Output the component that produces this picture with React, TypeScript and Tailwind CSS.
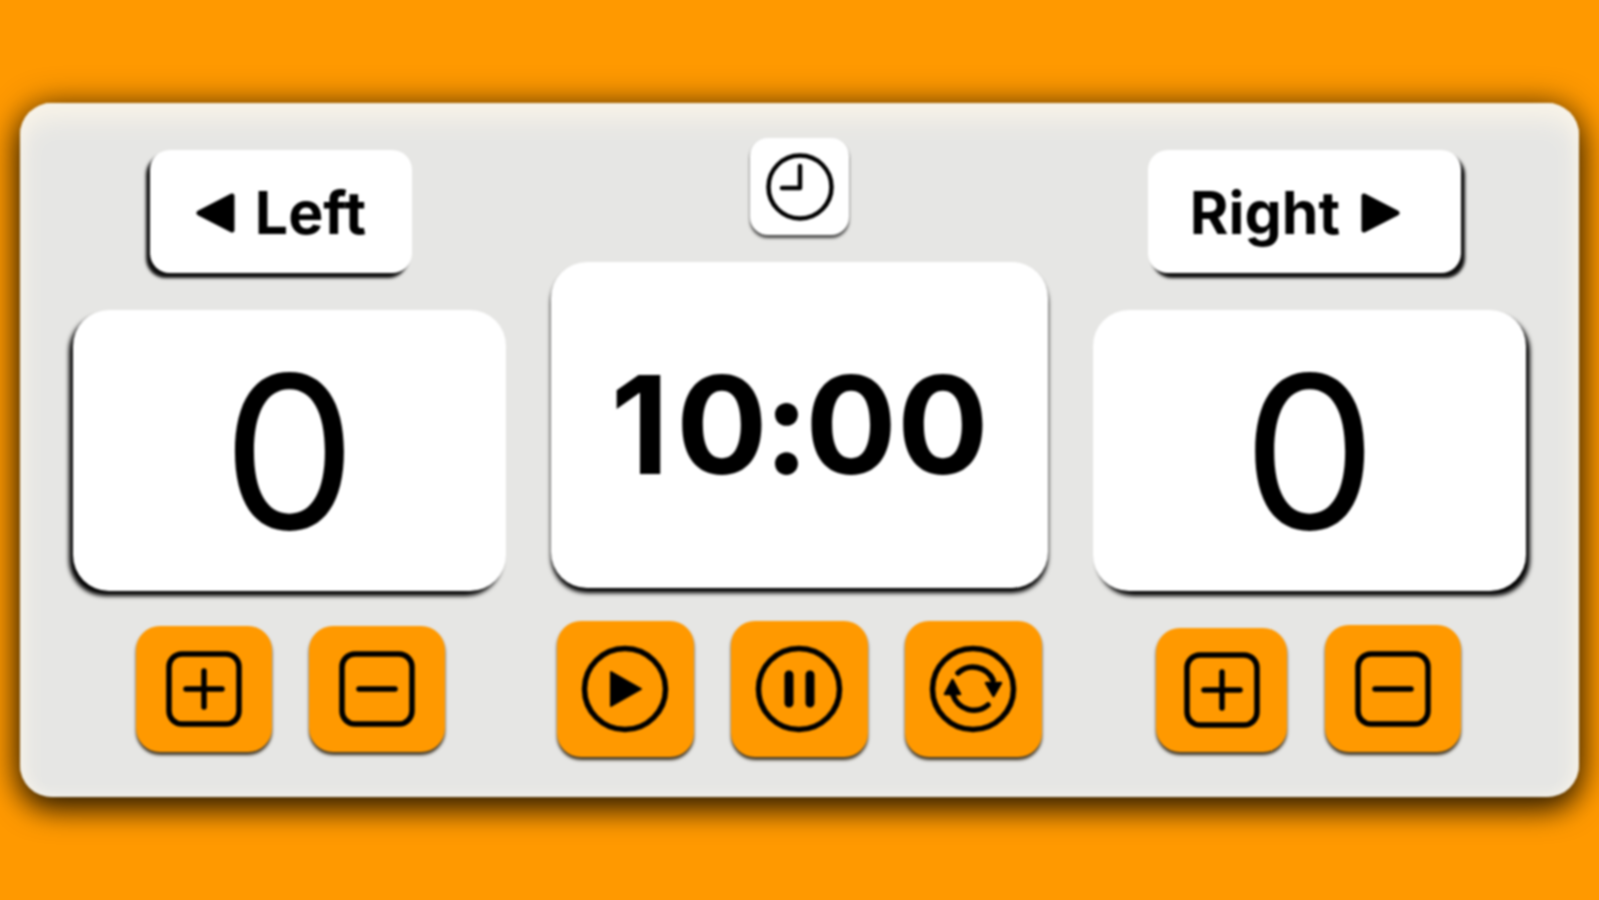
import React from "react";

const Stroke = { fill: "none", stroke: "#000", strokeLinecap: "round" as const, strokeLinejoin: "round" as const };

function PlusSquare() {
  return (
    <svg width="76" height="76" viewBox="0 0 76 76">
      <rect x="3" y="3" width="70" height="70" rx="13" {...Stroke} strokeWidth="5.5" />
      <path d="M38 20V56M20 38H56" {...Stroke} strokeWidth="5.5" />
    </svg>
  );
}
function MinusSquare() {
  return (
    <svg width="76" height="76" viewBox="0 0 76 76">
      <rect x="3" y="3" width="70" height="70" rx="13" {...Stroke} strokeWidth="5.5" />
      <path d="M20 38H56" {...Stroke} strokeWidth="5.5" />
    </svg>
  );
}
function Ring({ children }: { children?: React.ReactNode }) {
  return (
    <svg width="88" height="88" viewBox="0 0 88 88">
      <circle cx="44" cy="44" r="40.5" {...Stroke} strokeWidth="5.5" />
      {children}
    </svg>
  );
}
function Clock() {
  return (
    <svg width="68" height="68" viewBox="0 0 68 68">
      <circle cx="34" cy="34" r="31.5" {...Stroke} strokeWidth="4.5" />
      <path d="M34 13V35H16" {...Stroke} strokeWidth="4.5" />
    </svg>
  );
}
function Tri({ dir }: { dir: "l" | "r" }) {
  return (
    <svg width="40" height="40" viewBox="0 0 40 40" className="shrink-0">
      <path
        d={dir === "l" ? "M36 3V37L3 20Z" : "M4 3V37L37 20Z"}
        fill="#000"
        stroke="#000"
        strokeWidth="5"
        strokeLinejoin="round"
      />
    </svg>
  );
}

function Ctl({ children, cls }: { children: React.ReactNode; cls: string }) {
  return (
    <button className={`flex items-center justify-center rounded-[24px] bg-[#ff9900] shadow-[0_3px_3px_rgba(30,20,0,0.85)] ${cls}`}>
      {children}
    </button>
  );
}

export default function App() {
  return (
    <div className="h-[900px] w-full overflow-hidden bg-[#ff9900] px-5 pt-[103px] font-['Inter',sans-serif] text-black">
      <div className="flex h-[694px] gap-[45px] rounded-[32px] bg-[#e6e6e4] px-[53px] pt-[35px] blur-[0.8px] shadow-[0_12px_30px_rgba(0,0,0,0.75),0_0_34px_rgba(0,0,0,0.45),inset_0_16px_24px_#f8f3e8,inset_0_0_14px_#f8f5ec]">
        {/* Left column */}
        <div className="flex w-[433px] flex-col pt-[12px]">
          <div className="flex h-[123px] w-[262px] items-center justify-center gap-[19px] self-start ml-[77px] rounded-[20px] bg-white pt-[2px] text-[59px] font-bold shadow-[-4px_5px_3px_rgba(0,0,0,0.95)]">
            <Tri dir="l" />
            <span className="leading-none">Left</span>
          </div>
          <div className="mt-[37px] flex h-[281px] items-center justify-center rounded-[36px] bg-white pt-[2px] text-[213px] font-normal leading-none shadow-[-4px_5px_4px_#000]">
            0
          </div>
          <div className="ml-[63px] mt-[35px] flex gap-[37px]">
            <Ctl cls="h-[126px] w-[136px]"><PlusSquare /></Ctl>
            <Ctl cls="h-[126px] w-[136px]"><MinusSquare /></Ctl>
          </div>
        </div>

        {/* Center column */}
        <div className="flex w-[498px] flex-col">
          <div className="flex h-[97px] w-[99px] items-center justify-center self-center rounded-[18px] bg-white shadow-[0_3px_3px_rgba(0,0,0,0.7)]">
            <Clock />
          </div>
          <div className="mt-[27px] flex h-[326px] items-center justify-center rounded-[36px] bg-white text-[136px] font-bold leading-none shadow-[0_5px_4px_#000]">
            <span>
              <span className="mr-[7px]">1</span>
              <span>0</span>
              <span className="mx-[-4px]">:</span>
              <span>00</span>
            </span>
          </div>
          <div className="ml-[6px] mt-[33px] flex gap-[37px]">
            <Ctl cls="h-[136px] w-[137px]">
              <Ring>
                <path d="M30 27V61L60 44Z" fill="#000" stroke="#000" strokeWidth="2" strokeLinejoin="round" />
              </Ring>
            </Ctl>
            <Ctl cls="h-[136px] w-[137px]">
              <Ring>
                <path d="M34 30V58M55 30V58" {...Stroke} strokeWidth="9" />
              </Ring>
            </Ctl>
            <Ctl cls="h-[136px] w-[137px]">
              <Ring>
                <path d="M29 28A22 22 0 0 1 64 35M59 60A22 22 0 0 1 24 50" {...Stroke} strokeWidth="5.5" />
                <path d="M57 38H72L64.5 51Z M16 49H31L23.5 35Z" fill="#000" stroke="#000" strokeWidth="2.5" strokeLinejoin="round" />
              </Ring>
            </Ctl>
          </div>
        </div>

        {/* Right column */}
        <div className="flex w-[433px] flex-col pt-[12px]">
          <div className="flex h-[123px] w-[313px] items-center justify-center gap-[20px] self-start ml-[55px] rounded-[20px] bg-white pr-[20px] pt-[2px] text-[59px] font-bold shadow-[4px_5px_3px_rgba(0,0,0,0.95)]">
            <span className="leading-none">Right</span>
            <Tri dir="r" />
          </div>
          <div className="mt-[37px] flex h-[281px] items-center justify-center rounded-[36px] bg-white pt-[2px] text-[213px] font-normal leading-none shadow-[4px_5px_4px_#000]">
            0
          </div>
          <div className="ml-[63px] mt-[34px] flex items-end gap-[38px]">
            <Ctl cls="h-[124px] w-[131px]"><PlusSquare /></Ctl>
            <Ctl cls="h-[127px] w-[136px]"><MinusSquare /></Ctl>
          </div>
        </div>
      </div>
    </div>
  );
}
